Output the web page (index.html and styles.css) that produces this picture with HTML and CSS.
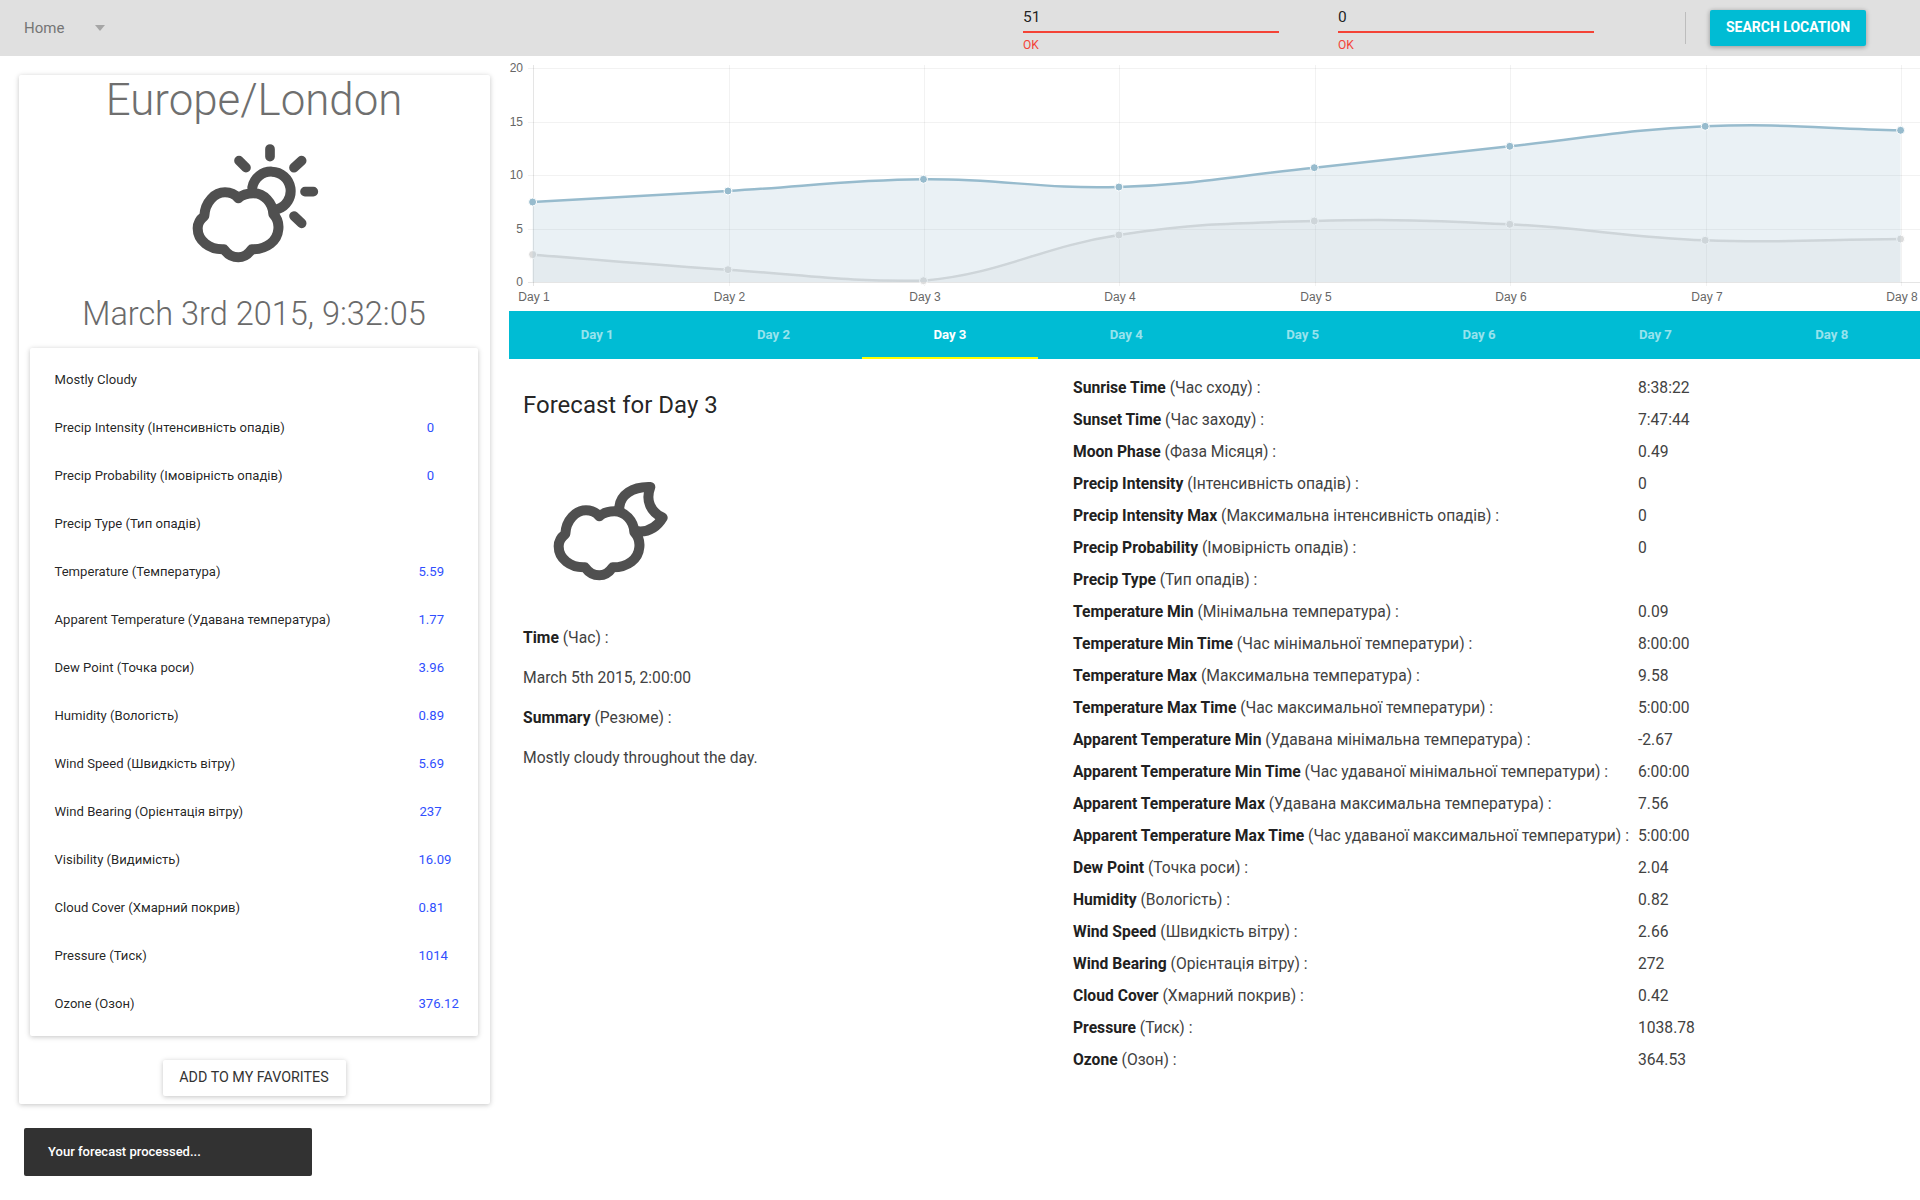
FILE: index.html
```html
<!DOCTYPE html>
<html lang="en">
<head>
<meta charset="utf-8">
<title>Forecast</title>
<link rel="stylesheet" href="styles.css">
</head>
<body>
<header class="topbar">
  <div class="nav-menu"><span class="nav-label">Home</span><span class="nav-caret"></span></div>
  <div class="field"><div class="field-value">51</div><div class="field-line"></div><div class="field-error">OK</div></div>
  <div class="field field-second"><div class="field-value">0</div><div class="field-line"></div><div class="field-error">OK</div></div>
  <div class="bar-divider"></div>
  <button class="search-button">SEARCH LOCATION</button>
</header>
<div class="page">
  <aside class="sidebar">
    <section class="card">
      <h1 class="city">Europe/London</h1>
      <svg class="weather-icon sun-icon" viewBox="0 0 510 420" width="170" height="140">
        <g fill="none" stroke="#505050" stroke-linecap="round" stroke-linejoin="round">
          <path stroke-width="30" d="M247,172 A58,58 0 1 1 322,238"/>
          <path stroke-width="29" d="M300,57V80M395,92L372,113M405,185H430M372,258L395,280M207,92L228,113"/>
          <path stroke-width="30" d="M205,205C220,192 235,190 250,190C282,190 308,218 310,252C322,265 327,280 325,298C322,332 292,358 245,358C235,372 220,382 205,382C188,382 172,372 162,358C118,360 83,332 83,295C83,280 90,268 103,258C105,215 135,187 165,187C180,187 195,193 205,205Z"/>
        </g>
      </svg>
      <h2 class="clock">March 3rd 2015, 9:32:05</h2>
      <ul class="stats">
        <li class="stat"><span>Mostly Cloudy</span></li>
        <li class="stat"><span>Precip Intensity (Інтенсивність опадів)</span><span class="stat-value">0</span></li>
        <li class="stat"><span>Precip Probability (Імовірність опадів)</span><span class="stat-value">0</span></li>
        <li class="stat"><span>Precip Type (Тип опадів)</span></li>
        <li class="stat"><span>Temperature (Температура)</span><span class="stat-value">5.59</span></li>
        <li class="stat"><span>Apparent Temperature (Удавана температура)</span><span class="stat-value">1.77</span></li>
        <li class="stat"><span>Dew Point (Точка роси)</span><span class="stat-value">3.96</span></li>
        <li class="stat"><span>Humidity (Вологість)</span><span class="stat-value">0.89</span></li>
        <li class="stat"><span>Wind Speed (Швидкість вітру)</span><span class="stat-value">5.69</span></li>
        <li class="stat"><span>Wind Bearing (Орієнтація вітру)</span><span class="stat-value">237</span></li>
        <li class="stat"><span>Visibility (Видимість)</span><span class="stat-value">16.09</span></li>
        <li class="stat"><span>Cloud Cover (Хмарний покрив)</span><span class="stat-value">0.81</span></li>
        <li class="stat"><span>Pressure (Тиск)</span><span class="stat-value">1014</span></li>
        <li class="stat"><span>Ozone (Озон)</span><span class="stat-value">376.12</span></li>
      </ul>
      <div class="card-actions"><button class="fav-button">ADD TO MY FAVORITES</button></div>
    </section>
  </aside>
  <main class="content">
    <svg class="chart" viewBox="509 56 1411 255" width="1411" height="255">
      <g class="grid">
        <path d="M528,68.5H1920M528,122.5H1920M528,175.5H1920M528,229.5H1920"/>
        <path d="M729.5,65V286M924.5,65V286M1119.5,65V286M1315.5,65V286M1510.5,65V286M1706.5,65V286M1901.5,65V286"/>
      </g>
      <path class="grid-axis" d="M533.5,65V286M528,282.5H1920"/>
      <path class="area-gray" d="M532.6,254.7C610.8,260.7 649.8,264.5 728,269.7C806.2,274.9 845.3,282 923.5,280.7C1001.7,273.8 1040.7,246.9 1118.9,235C1197.1,223.1 1236.1,223.1 1314.3,221C1392.5,218.9 1431.6,220.4 1509.8,224.3C1588,228.2 1627,237.4 1705.2,240.3C1783.4,243.2 1822.4,239.5 1900.6,239V282H532.6Z"/>
      <path class="line-gray" d="M532.6,254.7C610.8,260.7 649.8,264.5 728,269.7C806.2,274.9 845.3,282 923.5,280.7C1001.7,273.8 1040.7,246.9 1118.9,235C1197.1,223.1 1236.1,223.1 1314.3,221C1392.5,218.9 1431.6,220.4 1509.8,224.3C1588,228.2 1627,237.4 1705.2,240.3C1783.4,243.2 1822.4,239.5 1900.6,239"/>
      <g class="dots-gray">
        <circle cx="532.6" cy="254.7" r="4"/><circle cx="728" cy="269.7" r="4"/><circle cx="923.5" cy="280.7" r="4"/><circle cx="1118.9" cy="235" r="4"/><circle cx="1314.3" cy="221" r="4"/><circle cx="1509.8" cy="224.3" r="4"/><circle cx="1705.2" cy="240.3" r="4"/><circle cx="1900.6" cy="239" r="4"/>
      </g>
      <path class="area-blue" d="M532.6,202C610.8,197.6 649.8,195.5 728,191C806.2,186.5 845.3,180.1 923.5,179.3C1001.7,178.5 1040.7,189.3 1118.9,187C1197.1,184.7 1236.1,175.8 1314.3,167.7C1392.5,159.6 1431.6,154.6 1509.8,146.3C1588,138 1627,129.5 1705.2,126.3C1783.4,123.1 1822.4,128.7 1900.6,130.3V282H532.6Z"/>
      <path class="line-blue" d="M532.6,202C610.8,197.6 649.8,195.5 728,191C806.2,186.5 845.3,180.1 923.5,179.3C1001.7,178.5 1040.7,189.3 1118.9,187C1197.1,184.7 1236.1,175.8 1314.3,167.7C1392.5,159.6 1431.6,154.6 1509.8,146.3C1588,138 1627,129.5 1705.2,126.3C1783.4,123.1 1822.4,128.7 1900.6,130.3"/>
      <g class="dots-blue">
        <circle cx="532.6" cy="202" r="4"/><circle cx="728" cy="191" r="4"/><circle cx="923.5" cy="179.3" r="4"/><circle cx="1118.9" cy="187" r="4"/><circle cx="1314.3" cy="167.7" r="4"/><circle cx="1509.8" cy="146.3" r="4"/><circle cx="1705.2" cy="126.3" r="4"/><circle cx="1900.6" cy="130.3" r="4"/>
      </g>
      <g class="y-labels">
        <text x="523" y="72">20</text><text x="523" y="126">15</text><text x="523" y="179">10</text><text x="523" y="233">5</text><text x="523" y="286">0</text>
      </g>
      <g class="x-labels">
        <text x="534" y="301">Day 1</text><text x="729.5" y="301">Day 2</text><text x="925" y="301">Day 3</text><text x="1120" y="301">Day 4</text><text x="1316" y="301">Day 5</text><text x="1511" y="301">Day 6</text><text x="1707" y="301">Day 7</text><text x="1902" y="301">Day 8</text>
      </g>
    </svg>
    <nav class="tabs">
      <div class="tab">Day 1</div>
      <div class="tab">Day 2</div>
      <div class="tab tab-active">Day 3</div>
      <div class="tab">Day 4</div>
      <div class="tab">Day 5</div>
      <div class="tab">Day 6</div>
      <div class="tab">Day 7</div>
      <div class="tab">Day 8</div>
    </nav>
    <div class="detail">
      <section class="summary">
        <h3 class="summary-title">Forecast for Day 3</h3>
        <svg class="weather-icon moon-icon" viewBox="0 0 510 420" width="170" height="140">
          <g fill="none" stroke="#505050" stroke-width="30" stroke-linecap="round" stroke-linejoin="round">
            <path d="M265,177C268,142 303,115 358,117C343,157 358,192 395,209C378,237 353,252 323,250"/>
            <path d="M205,205C220,192 235,190 250,190C282,190 308,218 310,252C322,265 327,280 325,298C322,332 292,358 245,358C235,372 220,382 205,382C188,382 172,372 162,358C118,360 83,332 83,295C83,280 90,268 103,258C105,215 135,187 165,187C180,187 195,193 205,205Z"/>
          </g>
        </svg>
        <p class="summary-line"><b>Time</b> (Час) :</p>
        <p class="summary-line">March 5th 2015, 2:00:00</p>
        <p class="summary-line"><b>Summary</b> (Резюме) :</p>
        <p class="summary-line">Mostly cloudy throughout the day.</p>
      </section>
      <dl class="facts">
        <dt><b>Sunrise Time</b> (Час сходу) :</dt><dd>8:38:22</dd>
        <dt><b>Sunset Time</b> (Час заходу) :</dt><dd>7:47:44</dd>
        <dt><b>Moon Phase</b> (Фаза Місяця) :</dt><dd>0.49</dd>
        <dt><b>Precip Intensity</b> (Інтенсивність опадів) :</dt><dd>0</dd>
        <dt><b>Precip Intensity Max</b> (Максимальна інтенсивність опадів) :</dt><dd>0</dd>
        <dt><b>Precip Probability</b> (Імовірність опадів) :</dt><dd>0</dd>
        <dt><b>Precip Type</b> (Тип опадів) :</dt><dd></dd>
        <dt><b>Temperature Min</b> (Мінімальна температура) :</dt><dd>0.09</dd>
        <dt><b>Temperature Min Time</b> (Час мінімальної температури) :</dt><dd>8:00:00</dd>
        <dt><b>Temperature Max</b> (Максимальна температура) :</dt><dd>9.58</dd>
        <dt><b>Temperature Max Time</b> (Час максимальної температури) :</dt><dd>5:00:00</dd>
        <dt><b>Apparent Temperature Min</b> (Удавана мінімальна температура) :</dt><dd>-2.67</dd>
        <dt><b>Apparent Temperature Min Time</b> (Час удаваної мінімальної температури) :</dt><dd>6:00:00</dd>
        <dt><b>Apparent Temperature Max</b> (Удавана максимальна температура) :</dt><dd>7.56</dd>
        <dt><b>Apparent Temperature Max Time</b> (Час удаваної максимальної температури) :</dt><dd>5:00:00</dd>
        <dt><b>Dew Point</b> (Точка роси) :</dt><dd>2.04</dd>
        <dt><b>Humidity</b> (Вологість) :</dt><dd>0.82</dd>
        <dt><b>Wind Speed</b> (Швидкість вітру) :</dt><dd>2.66</dd>
        <dt><b>Wind Bearing</b> (Орієнтація вітру) :</dt><dd>272</dd>
        <dt><b>Cloud Cover</b> (Хмарний покрив) :</dt><dd>0.42</dd>
        <dt><b>Pressure</b> (Тиск) :</dt><dd>1038.78</dd>
        <dt><b>Ozone</b> (Озон) :</dt><dd>364.53</dd>
      </dl>
    </div>
  </main>
</div>
<div class="snackbar">Your forecast processed...</div>
</body>
</html>
```
FILE: styles.css
```css
* { box-sizing: border-box; }
html, body { margin: 0; padding: 0; background: #fff; }
body { font-family: Roboto, "Noto Sans", sans-serif; color: rgba(0,0,0,.87); min-height: 1200px; }

.topbar { height: 56px; background: #e0e0e0; display: flex; align-items: center; padding: 0 54px 0 24px; }
.nav-menu { width: 999px; display: flex; align-items: center; }
.nav-label { width: 71px; font-size: 15px; font-weight: 400; color: #757575; }
.nav-caret { width: 0; height: 0; border-left: 5px solid transparent; border-right: 5px solid transparent; border-top: 6px solid #a6a6a6; }
.field { width: 256px; height: 56px; }
.field-second { margin-left: 59px; }
.field-value { height: 31px; padding-top: 8px; font-size: 15.5px; line-height: 18px; color: rgba(0,0,0,.87); }
.field-line { height: 2px; background: #f44336; }
.field-error { margin-top: 5px; font-size: 12px; line-height: 15px; color: #f44336; }
.bar-divider { width: 1px; height: 32px; margin: 0 24px 0 91px; background: #bdbdbd; }
.search-button { width: 156px; height: 36px; border: 0; border-radius: 2px; background: #00bcd4; color: #fff; font: 700 14px Roboto, sans-serif; padding: 0 0 2px; box-shadow: 0 1px 6px rgba(0,0,0,.12), 0 1px 4px rgba(0,0,0,.24); }

.page { display: flex; align-items: flex-start; }
.sidebar { width: 509px; flex: none; padding: 19px 19px 12px; }
.card { background: #fff; border-radius: 2px; box-shadow: 0 1px 6px rgba(0,0,0,.12), 0 1px 4px rgba(0,0,0,.12); text-align: center; padding: 0 12px 8px 11px; }
.city { margin: 0; font-size: 43.8px; line-height: 50px; padding-bottom: 2px; font-weight: 300; color: #6f6f6f; }
.weather-icon { display: block; }
.sun-icon { margin: 3px 0 0 140px; }
.clock { margin: 24px 0 14px; font-size: 32.5px; line-height: 40px; font-weight: 300; color: #6a6a6a; }
.stats { list-style: none; margin: 0; padding: 7px 0 9px; background: #fff; border-radius: 2px; text-align: left; box-shadow: 0 1px 6px rgba(0,0,0,.12), 0 1px 4px rgba(0,0,0,.12); }
.stat { height: 48px; position: relative; display: flex; align-items: center; padding-left: 24.5px; font-size: 13.1px; color: rgba(0,0,0,.87); }
.stat-value { position: absolute; left: 388.5px; width: 24px; text-align: center; white-space: nowrap; color: #304ffe; }
.card-actions { margin-top: 24px; }
.fav-button { width: 183px; height: 36px; border: 0; border-radius: 2px; background: #fff; color: #333; font: 400 14.3px Roboto, sans-serif; padding: 0 0 3px; box-shadow: 0 1px 6px rgba(0,0,0,.12), 0 1px 4px rgba(0,0,0,.12); }

.content { width: 1411px; flex: none; }
.chart { display: block; font-family: "Liberation Sans", sans-serif; font-size: 12px; }
.grid path { fill: none; stroke: rgba(0,0,0,.05); stroke-width: 1; }
.grid-axis { fill: none; stroke: rgba(0,0,0,.1); stroke-width: 1; }
.area-gray { fill: rgba(220,220,220,.2); }
.line-gray { fill: none; stroke: #dcdcdc; stroke-width: 2.5; }
.dots-gray circle { fill: #dcdcdc; stroke: #fff; stroke-width: 1; }
.area-blue { fill: rgba(151,187,205,.2); }
.line-blue { fill: none; stroke: #97bbcd; stroke-width: 2.5; }
.dots-blue circle { fill: #97bbcd; stroke: #fff; stroke-width: 1; }
.y-labels text { text-anchor: end; fill: #666; }
.x-labels text { text-anchor: middle; fill: #666; }

.tabs { display: grid; grid-template-columns: repeat(8, 1fr); height: 48px; background: #00bcd4; }
.tab { display: flex; align-items: center; justify-content: center; padding-bottom: 2px; font-size: 13.2px; font-weight: 700; color: rgba(255,255,255,.6); }
.tab-active { color: #fff; box-shadow: inset 0 -2px 0 #ffff00; }

.detail { display: flex; align-items: flex-start; }
.summary { width: 564px; flex: none; padding: 30px 0 0 14px; }
.summary-title { margin: 0 0 27px; font-size: 24px; line-height: 32px; font-weight: 400; color: rgba(0,0,0,.87); }
.moon-icon { margin: 0 0 30px 8px; }
.summary-line { margin: 0; height: 40px; line-height: 40px; font-size: 15.65px; color: #424242; }
.summary-line b, .facts b { font-weight: 700; color: #212121; }
.facts { margin: 12px 0 0; display: grid; grid-template-columns: 565px 1fr; grid-auto-rows: 32px; align-items: center; font-size: 15.65px; color: #424242; }
.facts dt, .facts dd { margin: 0; white-space: nowrap; }

.snackbar { position: fixed; left: 24px; bottom: 24px; width: 288px; height: 48px; padding: 0 0 2px 24px; display: flex; align-items: center; border-radius: 2px; background: #323232; color: #fff; font-size: 13px; font-weight: 500; }
```
